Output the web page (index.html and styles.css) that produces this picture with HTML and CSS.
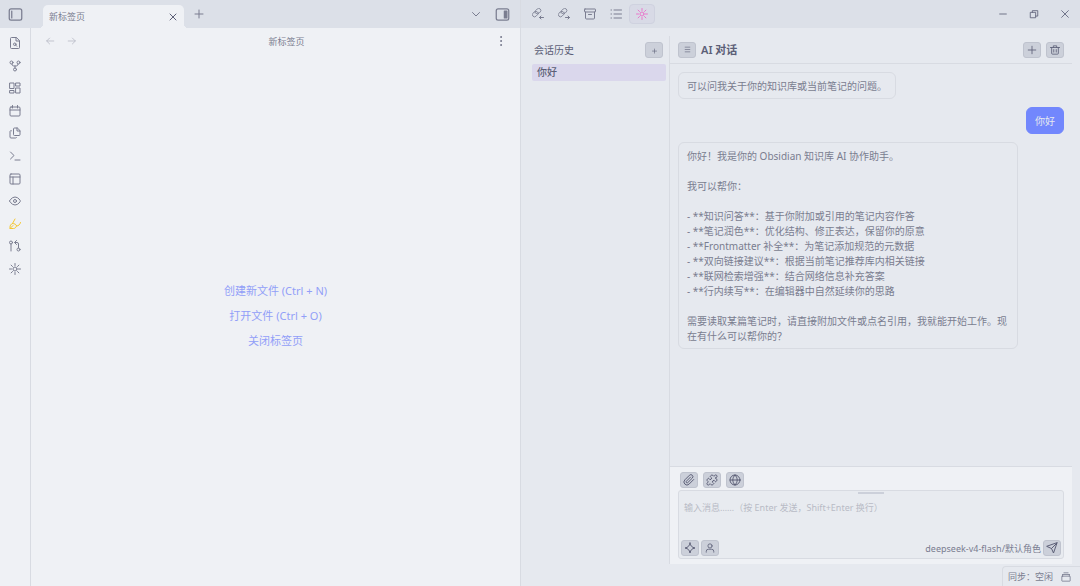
FILE: index.html
```html
<!DOCTYPE html>
<html lang="zh-CN">

<head>
    <meta charset="utf-8">
    <meta name="viewport" content="width=device-width, initial-scale=1">
    <title>新标签页</title>
    <link rel="stylesheet" href="styles.css">
</head>

<body>
    <div class="workspace">
        <section class="left">
            <header class="titlebar">
                <button class="icon-btn sidebar-toggle" aria-label="展开侧边栏">
                    <svg class="icon icon-lg" viewBox="0 0 24 24"><rect x="2" y="3" width="20" height="18" rx="3" /><path d="M6 6.500v11" /></svg>
                </button>
                <div class="tab">
                    <span class="tab-title">新标签页</span>
                    <button class="icon-btn tab-close" aria-label="关闭">
                        <svg class="icon" viewBox="0 0 24 24"><path d="M18 6 6 18M6 6l12 12" /></svg>
                    </button>
                </div>
                <button class="icon-btn new-tab" aria-label="新建标签页">
                    <svg class="icon" viewBox="0 0 24 24"><path d="M4 12h16M12 4v16" /></svg>
                </button>
                <span class="spacer"></span>
                <button class="icon-btn" aria-label="标签页列表">
                    <svg class="icon" viewBox="0 0 24 24"><path d="m5 9 7 7 7-7" /></svg>
                </button>
                <button class="icon-btn" aria-label="收起侧边栏">
                    <svg class="icon icon-lg" viewBox="0 0 24 24"><rect x="2" y="3" width="20" height="18" rx="3" /><rect x="15" y="6.500" width="4" height="11" fill="currentColor" /></svg>
                </button>
            </header>
            <div class="left-body">
                <nav class="ribbon">
                    <div class="ribbon-list">
                        <button class="icon-btn" aria-label="快速切换">
                            <svg class="icon" viewBox="0 0 24 24"><path d="M14 1H5a2 2 0 0 0-2 2v18a2 2 0 0 0 2 2h14a2 2 0 0 0 2-2V8zM14 1v7h7" /><circle cx="11.500" cy="14.500" r="2.500" /><path d="m13.500 16.500 2 2" /></svg>
                        </button>
                        <button class="icon-btn" aria-label="关系图谱">
                            <svg class="icon" viewBox="0 0 24 24"><circle cx="12" cy="19" r="3" /><circle cx="5" cy="5" r="3" /><circle cx="19" cy="5" r="3" /><path d="M6 8c0 4 2 4 6 4s6 0 6-4M12 12v4" /></svg>
                        </button>
                        <button class="icon-btn" aria-label="白板">
                            <svg class="icon" viewBox="0 0 24 24"><rect x="2" y="2" width="8" height="11" /><rect x="14" y="2" width="8" height="6" /><rect x="14" y="12" width="8" height="10" /><rect x="2" y="17" width="8" height="5" /></svg>
                        </button>
                        <button class="icon-btn" aria-label="日记">
                            <svg class="icon" viewBox="0 0 24 24"><rect x="2" y="4" width="20" height="18" rx="2" /><path d="M7 1v5M17 1v5M2 10h20" /></svg>
                        </button>
                        <button class="icon-btn" aria-label="模板">
                            <svg class="icon" viewBox="0 0 24 24"><path d="M16 2h-5a2 2 0 0 0-2 2v11a2 2 0 0 0 2 2h9a2 2 0 0 0 2-2V8zM16 2v6h6" /><path d="M5 7.500a2 2 0 0 0-3 2V20a2 2 0 0 0 2 2h9a2 2 0 0 0 2-1" /></svg>
                        </button>
                        <button class="icon-btn" aria-label="命令面板">
                            <svg class="icon" viewBox="0 0 24 24"><path d="m3 4 7 7-7 7M12 20h10" /></svg>
                        </button>
                        <button class="icon-btn" aria-label="数据库">
                            <svg class="icon" viewBox="0 0 24 24"><rect x="2" y="2" width="20" height="20" rx="2" /><path d="M2 8h20M8 8v14" /></svg>
                        </button>
                        <button class="icon-btn" aria-label="预览">
                            <svg class="icon" viewBox="0 0 24 24"><path d="M1 12s4-8 11-8 11 8 11 8-4 8-11 8S1 12 1 12z" /><circle cx="12" cy="12" r="3" /></svg>
                        </button>
                        <button class="icon-btn highlight" aria-label="高亮">
                            <svg class="icon" viewBox="0 0 24 24"><path d="M12 2 7 11c-3 1-5 4-5 7v3h7c3 0 5-2 6-5" /><path d="M7 11c4 0 8 2 8 5 4 0 7-3 8-7M2 21l6-6" /></svg>
                        </button>
                        <button class="icon-btn" aria-label="Git">
                            <svg class="icon" viewBox="0 0 24 24"><circle cx="4" cy="5" r="3" /><path d="M4 8v14" /><circle cx="19" cy="19" r="3" /><path d="M19 16V8a3 3 0 0 0-3-3h-4M15 1l-4 4 4 4" /></svg>
                        </button>
                        <button class="icon-btn" aria-label="AI 助手">
                            <svg class="icon" viewBox="0 0 24 24"><circle cx="12" cy="12" r="4" /><path d="M12 1v4M12 19v4M1 12h4M19 12h4M4.200 4.200 7 7M17 17l2.800 2.800M4.200 19.800 7 17M17 7l2.800-2.800" /></svg>
                        </button>
                    </div>
                </nav>
                <main class="editor">
                    <div class="view-header">
                        <button class="icon-btn dim" aria-label="后退">
                            <svg class="icon icon-sm" viewBox="0 0 24 24"><path d="M21 12H4M11 5l-7 7 7 7" /></svg>
                        </button>
                        <button class="icon-btn dim" aria-label="前进">
                            <svg class="icon icon-sm" viewBox="0 0 24 24"><path d="M3 12h17M13 5l7 7-7 7" /></svg>
                        </button>
                        <span class="view-title">新标签页</span>
                        <button class="icon-btn" aria-label="更多选项">
                            <svg class="icon" viewBox="0 0 24 24"><g fill="currentColor"><circle cx="12" cy="4" r="1" /><circle cx="12" cy="12" r="1" /><circle cx="12" cy="20" r="1" /></g></svg>
                        </button>
                    </div>
                    <div class="empty">
                        <a href="#">创建新文件 (Ctrl + N)</a>
                        <a href="#">打开文件 (Ctrl + O)</a>
                        <a href="#">关闭标签页</a>
                    </div>
                </main>
            </div>
        </section>

        <section class="right">
            <header class="titlebar side-tabs">
                <button class="side-tab" aria-label="反向链接">
                    <svg class="icon" viewBox="0 0 24 24"><g transform="translate(-1 -1) scale(.85)"><path d="M10 13a5 5 0 0 0 7.540.540l3-3a5 5 0 0 0-7.070-7.070l-4 4a5 5 0 0 0-1 5.500" /><path d="M14 11a5 5 0 0 0-7.540-.540l-3 3a5 5 0 0 0 7.070 7.070l4-4a5 5 0 0 0 1-5.500" /></g><path d="M23 19h-8M18 16l-3 3 3 3" /></svg>
                </button>
                <button class="side-tab" aria-label="出链">
                    <svg class="icon" viewBox="0 0 24 24"><g transform="translate(-1 -1) scale(.85)"><path d="M10 13a5 5 0 0 0 7.540.540l3-3a5 5 0 0 0-7.070-7.070l-4 4a5 5 0 0 0-1 5.500" /><path d="M14 11a5 5 0 0 0-7.540-.540l-3 3a5 5 0 0 0 7.070 7.070l4-4a5 5 0 0 0 1-5.500" /></g><path d="M15 19h8M20 16l3 3-3 3" /></svg>
                </button>
                <button class="side-tab" aria-label="属性">
                    <svg class="icon" viewBox="0 0 24 24"><rect x="1" y="2" width="22" height="6" rx="1" /><path d="M3 8v12a2 2 0 0 0 2 2h14a2 2 0 0 0 2-2V8M9 13h6" /></svg>
                </button>
                <button class="side-tab" aria-label="大纲">
                    <svg class="icon" viewBox="0 0 24 24"><path d="M8 4h15M8 12h15M8 20h15M2 4h1M2 12h1M2 20h1" /></svg>
                </button>
                <button class="side-tab active" aria-label="AI 对话">
                    <svg class="icon" viewBox="0 0 24 24"><circle cx="12" cy="12" r="4" /><path d="M12 1v4M12 19v4M1 12h4M19 12h4M4.200 4.200 7 7M17 17l2.800 2.800M4.200 19.800 7 17M17 7l2.800-2.800" /></svg>
                </button>
                <span class="spacer"></span>
                <button class="window-btn" aria-label="最小化">
                    <svg class="icon icon-sm" viewBox="0 0 24 24"><path d="M4 12h16" /></svg>
                </button>
                <button class="window-btn" aria-label="还原">
                    <svg class="icon icon-sm" viewBox="0 0 24 24"><path d="M4 8h12v13H4zM8 8V4h13v13h-5" /></svg>
                </button>
                <button class="window-btn" aria-label="关闭窗口">
                    <svg class="icon icon-sm" viewBox="0 0 24 24"><path d="M4 4l16 16M20 4 4 20" /></svg>
                </button>
            </header>

            <div class="ai-view">
                <aside class="history">
                    <div class="history-header">
                        <span>会话历史</span>
                        <button class="btn" aria-label="新建会话">
                            <svg class="icon icon-xs" viewBox="0 0 24 24"><path d="M5 14h14M12 7v14" /></svg>
                        </button>
                    </div>
                    <button class="history-item">你好</button>
                </aside>

                <div class="chat">
                    <div class="chat-header">
                        <button class="btn" aria-label="会话列表">
                            <svg class="icon icon-xs" viewBox="0 0 24 24"><path d="M4 4h16M4 12h16M4 20h16" /></svg>
                        </button>
                        <h1>AI 对话</h1>
                        <button class="btn" aria-label="新对话">
                            <svg class="icon icon-sm" viewBox="0 0 24 24"><path d="M3 12h18M12 3v18" /></svg>
                        </button>
                        <button class="btn" aria-label="清空">
                            <svg class="icon icon-sm" viewBox="0 0 24 24"><path d="M1 6h22M4 6v14a2 2 0 0 0 2 2h12a2 2 0 0 0 2-2V6M8 6V2h8v4M9 11v6M15 11v6" /></svg>
                        </button>
                    </div>
                    <div class="messages">
                        <div class="bubble">可以问我关于你的知识库或当前笔记的问题。</div>
                        <div class="bubble user">你好</div>
                        <div class="bubble">你好！我是你的 Obsidian 知识库 AI 协作助手。

我可以帮你：

- **知识问答**：基于你附加或引用的笔记内容作答
- **笔记润色**：优化结构、修正表达，保留你的原意
- **Frontmatter 补全**：为笔记添加规范的元数据
- **双向链接建议**：根据当前笔记推荐库内相关链接
- **联网检索增强**：结合网络信息补充答案
- **行内续写**：在编辑器中自然延续你的思路

需要读取某篇笔记时，请直接附加文件或点名引用，我就能开始工作。现在有什么可以帮你的？</div>
                    </div>
                    <form class="composer">
                        <div class="tools">
                            <button type="button" class="btn" aria-label="附件">
                                <svg class="icon" viewBox="0 0 24 24"><path d="m21.400 11-9.200 9.200a6 6 0 0 1-8.500-8.500l9.200-9.200a4 4 0 0 1 5.700 5.700l-9.200 9.200a2 2 0 0 1-2.800-2.800l8.500-8.500" /></svg>
                            </button>
                            <button type="button" class="btn" aria-label="插件">
                                <svg class="icon" viewBox="0 0 24 24"><path d="M19.439 7.850c-.049.322.059.648.289.878l1.568 1.568c.470.470.706 1.087.706 1.704s-.235 1.233-.706 1.704l-1.611 1.611a.980.980 0 0 1-.837.276c-.470-.070-.802-.480-.968-.925a2.501 2.501 0 1 0-3.214 3.214c.446.166.855.497.925.968a.979.979 0 0 1-.276.837l-1.610 1.610a2.404 2.404 0 0 1-1.705.707 2.402 2.402 0 0 1-1.704-.706l-1.568-1.568a1.026 1.026 0 0 0-.877-.290c-.493.074-.840.504-1.020.968a2.500 2.500 0 1 1-3.237-3.237c.464-.180.894-.527.967-1.020a1.026 1.026 0 0 0-.289-.877l-1.568-1.568A2.402 2.402 0 0 1 1.998 12c0-.617.236-1.234.706-1.704L4.230 8.770c.240-.240.581-.353.917-.303.515.077.877.528 1.073 1.010a2.500 2.500 0 1 0 3.259-3.259c-.482-.196-.933-.558-1.010-1.073-.050-.336.062-.676.303-.917l1.525-1.525A2.402 2.402 0 0 1 12 1.998c.617 0 1.234.236 1.704.706l1.568 1.568c.230.230.556.338.877.290.493-.074.840-.504 1.020-.968a2.500 2.500 0 1 1 3.237 3.237c-.464.180-.894.527-.967 1.020Z" /></svg>
                            </button>
                            <button type="button" class="btn" aria-label="联网">
                                <svg class="icon" viewBox="0 0 24 24"><circle cx="12" cy="12" r="10" /><path d="M2 12h20M12 2c-6 6-6 14 0 20M12 2c6 6 6 14 0 20" /></svg>
                            </button>
                        </div>
                        <div class="input-box">
                            <span class="grip"></span>
                            <textarea aria-label="消息" placeholder="输入消息……（按 Enter 发送，Shift+Enter 换行）"></textarea>
                            <div class="input-footer">
                                <button type="button" class="btn" aria-label="技能">
                                    <svg class="icon" viewBox="0 0 24 24"><path d="M12 2c1 6 4 9 10 10-6 1-9 4-10 10-1-6-4-9-10-10 6-1 9-4 10-10z" /></svg>
                                </button>
                                <button type="button" class="btn" aria-label="角色">
                                    <svg class="icon icon-sm" viewBox="0 0 24 24"><circle cx="12" cy="7" r="5" /><path d="M3 22v-2a5 5 0 0 1 5-5h8a5 5 0 0 1 5 5v2" /></svg>
                                </button>
                                <span class="model">deepseek-v4-flash/默认角色</span>
                                <button type="button" class="btn" aria-label="发送">
                                    <svg class="icon" viewBox="0 0 24 24"><path d="M22 2 15 22l-4-9-9-4zM22 2 11 13" /></svg>
                                </button>
                            </div>
                        </div>
                    </form>
                </div>
            </div>
        </section>
    </div>

    <footer class="status-bar">
        <span>同步：空闲</span>
        <svg class="icon icon-sm" viewBox="0 0 24 24"><rect x="2" y="10" width="20" height="12" rx="1" /><path d="M4 6h16M7 2h10M4 6v4M20 6v4" /></svg>
    </footer>
</body>

</html>
```
FILE: styles.css
```css
:root {
    --base: #eff1f5;
    --mantle: #e6e9ef;
    --crust: #dce0e8;
    --button: #ccd0da;
    --line: #d8dbe2;
    --text: #5c5f77;
    --muted: #7a7d90;
    --faint: #b8bbc6;
    --accent: #7287fd;
}

* {
    box-sizing: border-box;
}

body {
    margin: 0;
    height: 100vh;
    overflow: hidden;
    font-family: "Noto Sans", "Noto Sans CJK SC", sans-serif;
    font-size: 10px;
    line-height: 15px;
    color: var(--muted);
    background: var(--base);
}

button,
textarea {
    margin: 0;
    padding: 0;
    border: 0;
    font: inherit;
    color: inherit;
    background: transparent;
}

button {
    cursor: pointer;
}

.icon {
    display: block;
    width: 12px;
    height: 12px;
    fill: none;
    stroke: currentColor;
    stroke-width: 2;
    stroke-linecap: round;
    stroke-linejoin: round;
}

.icon-lg {
    width: 15px;
    height: 15px;
}

.icon-sm {
    width: 10px;
    height: 10px;
}

.icon-xs {
    width: 7px;
    height: 7px;
}

.icon-btn {
    display: flex;
    align-items: center;
    justify-content: center;
    width: 22px;
    height: 22px;
}

.spacer {
    flex: 1;
}

.workspace {
    display: grid;
    grid-template-columns: 520fr 560fr;
    height: 100%;
}

.left,
.right {
    display: flex;
    flex-direction: column;
    min-width: 0;
    min-height: 0;
}

.titlebar {
    display: flex;
    align-items: center;
    flex: none;
    height: 28px;
    background: var(--crust);
}

.left .titlebar {
    gap: 4px;
    padding: 0 7px 0 4px;
}

/* tab */
.tab {
    position: relative;
    display: flex;
    align-items: center;
    justify-content: space-between;
    align-self: flex-end;
    width: 141px;
    height: 23px;
    margin-left: 13px;
    padding-left: 6px;
    border-radius: 5px 5px 0 0;
    background: var(--base);
}

.tab::before,
.tab::after {
    content: "";
    position: absolute;
    bottom: 0;
    width: 4px;
    height: 4px;
}

.tab::before {
    right: 100%;
    background: radial-gradient(circle at 0 0, transparent 4px, var(--base) 4px);
}

.tab::after {
    left: 100%;
    background: radial-gradient(circle at 100% 0, transparent 4px, var(--base) 4px);
}

.tab-title {
    font-size: 9px;
}

.tab-close {
    color: var(--text);
}

/* ribbon */
.left-body {
    display: flex;
    flex: 1;
    min-height: 0;
}

.ribbon {
    flex: none;
    width: 31px;
    padding-top: 4px;
    border-right: 1px solid var(--line);
}

.ribbon-list {
    display: flex;
    flex-direction: column;
    align-items: center;
    height: 248px;
}

.ribbon-list .icon-btn {
    flex: 1;
}

.ribbon .highlight {
    color: #f5c830;
}

/* editor */
.editor {
    display: flex;
    flex: 1;
    flex-direction: column;
    min-width: 0;
}

.view-header {
    display: flex;
    align-items: center;
    height: 26px;
    padding: 0 8px;
}

.view-title {
    flex: 1;
    font-size: 9px;
    text-align: center;
}

.dim {
    color: var(--faint);
}

.empty {
    display: flex;
    flex: 1;
    flex-direction: column;
    align-items: center;
    justify-content: center;
    gap: 10px;
    padding-bottom: 10px;
}

.empty a {
    font-size: 11px;
    color: #929ff8;
    text-decoration: none;
}

/* right side */
.right {
    border-left: 1px solid var(--line);
    background: var(--mantle);
}

.side-tabs {
    padding: 0 0 0 4px;
}

.side-tab {
    display: flex;
    align-items: center;
    justify-content: center;
    width: 26px;
    height: 20px;
}

.side-tab.active {
    border: 1px solid #cfd2df;
    border-radius: 4px;
    color: #ea76cb;
    background: #d8dae6;
}

.window-btn {
    display: flex;
    align-items: center;
    justify-content: center;
    width: 31px;
    height: 28px;
    color: var(--text);
}

.ai-view {
    display: flex;
    flex: 1;
    min-height: 0;
    padding: 8px 8px 22px 11px;
}

.btn {
    display: flex;
    align-items: center;
    justify-content: center;
    flex: none;
    width: 18px;
    height: 16px;
    border: 1px solid #bfc3ce;
    border-radius: 3px;
    color: var(--text);
    background: var(--button);
}

.history {
    flex: none;
    width: 138px;
    padding-right: 3px;
    border-right: 1px solid var(--line);
}

.history-header {
    display: flex;
    align-items: center;
    justify-content: space-between;
    height: 28px;
    padding: 0 3px 0 2px;
    color: var(--text);
}

.history-item {
    display: block;
    width: 100%;
    height: 17px;
    padding: 0 5px;
    border-radius: 2px;
    font-weight: 500;
    text-align: left;
    color: var(--text);
    background: #dad7ec;
}

.chat {
    display: flex;
    flex: 1;
    flex-direction: column;
    min-width: 0;
}

.chat-header {
    display: flex;
    align-items: center;
    gap: 5px;
    flex: none;
    height: 28px;
    padding: 0 8px;
    border-bottom: 1px solid var(--line);
}

.chat-header h1 {
    flex: 1;
    margin: 0;
    font-size: 11px;
    font-weight: 600;
    color: var(--text);
}

.messages {
    display: flex;
    flex: 1;
    flex-direction: column;
    align-items: flex-start;
    gap: 8px;
    min-height: 0;
    padding: 8px;
    overflow: auto;
}

.bubble {
    max-width: 88%;
    padding: 6px 8px 4px;
    border: 1px solid var(--line);
    border-radius: 6px;
    white-space: pre-wrap;
}

.bubble.user {
    align-self: flex-end;
    border-color: var(--accent);
    color: #e6e9ef;
    background: var(--accent);
}

/* composer */
.composer {
    flex: none;
    padding: 5px 8px;
    border-top: 1px solid var(--line);
    background: var(--base);
}

.tools {
    display: flex;
    gap: 5px;
    padding: 0 2px 2px;
}

.input-box {
    display: flex;
    flex-direction: column;
    align-items: stretch;
    border: 1px solid var(--line);
    border-radius: 3px;
    background: #e8ebf0;
}

.grip {
    align-self: center;
    width: 26px;
    height: 2px;
    margin-top: 1px;
    background: var(--button);
}

.input-box textarea {
    display: block;
    height: 46px;
    padding: 6px 5px;
    font-size: 9px;
    resize: none;
    outline: none;
}

.input-box textarea::placeholder {
    color: var(--faint);
}

.input-footer {
    display: flex;
    align-items: center;
    gap: 2px;
    padding: 0 2px 2px;
}

.model {
    flex: 1;
    font-size: 9px;
    text-align: right;
}

/* status bar, floats over the bottom right corner */
.status-bar {
    position: fixed;
    right: 0;
    bottom: 0;
    display: flex;
    align-items: center;
    gap: 8px;
    height: 20px;
    padding: 0 9px 0 5px;
    border: 1px solid var(--line);
    border-width: 1px 0 0 1px;
    border-radius: 4px 0 0 0;
    font-size: 9px;
    background: var(--mantle);
}
```
